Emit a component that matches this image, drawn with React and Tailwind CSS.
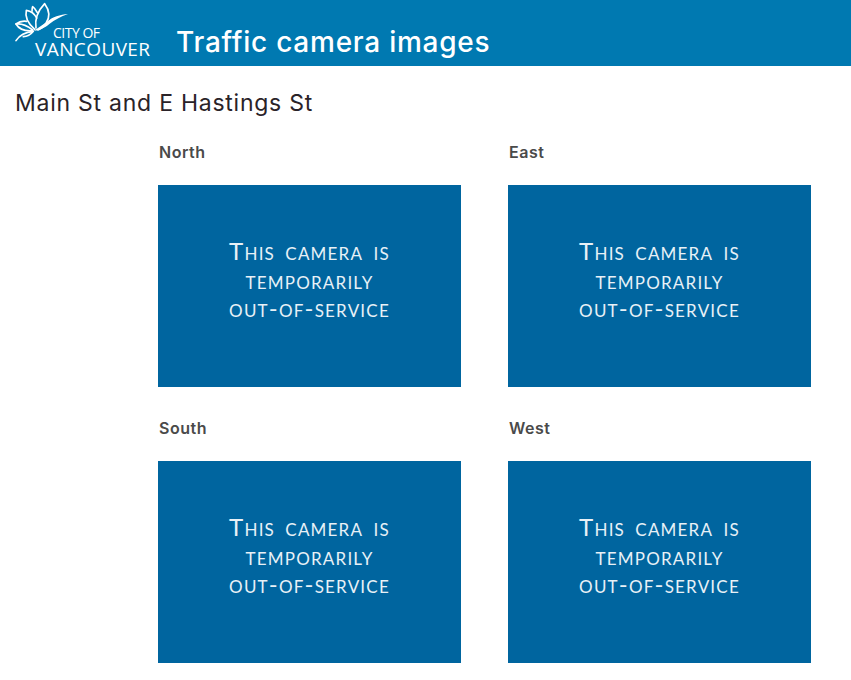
import React from "react";

const cameras = ["North", "East", "South", "West"];

const Logo = () => (
  <div className="relative w-[140px] h-[66px] shrink-0 flex flex-col pt-[26px] text-white font-['Open_Sans',sans-serif]">
    <svg width="60" height="46" viewBox="0 0 180 138" className="absolute left-[-2px] top-0" fill="none" stroke="#ffffff" strokeWidth="5" strokeLinejoin="round" strokeLinecap="round">
      <path d="M68 88 C50 72 38 52 43 31 C56 33 68 42 74 54" />
      <path d="M72 84 C68 58 78 32 98 11 C112 30 114 52 102 70 C96 79 88 86 78 90" />
      <path d="M76 38 C72 30 68 24 62 20 C60 24 60 28 60 34" />
      <path d="M104 66 C122 50 144 44 168 42 C146 50 128 60 112 72 C98 84 82 92 66 92" fill="#ffffff" stroke="none" />
      <path d="M62 90 C44 76 28 70 12 72 C20 66 32 62 44 64" />
      <path d="M12 72 C20 86 38 94 62 92" />
      <path d="M12 122 C22 106 40 96 64 94 C56 104 44 110 34 110" />
    </svg>
    <span className="ml-[39px] text-[14px] leading-[14px] tracking-[-0.5px]">CITY OF</span>
    <span className="ml-[21px] text-[19px] leading-[19px] tracking-[0.4px] font-medium">VANCOUVER</span>
  </div>
);

const CameraTile = ({ name }) => (
  <div>
    <h3 className="ml-px h-[68px] pt-[25px] text-[16px] leading-[20px] tracking-[0.5px] font-semibold text-[#4a4a4a]">{name}</h3>
    <div className="w-[303px] h-[202px] bg-[#00659f] flex flex-col items-center justify-center pb-[12px] text-[#e8f1f7] font-['Lato',sans-serif] text-[24px] leading-[28.5px] tracking-[1.2px] [word-spacing:3px] [font-variant:small-caps]">
      <span>This camera is</span>
      <span>temporarily</span>
      <span>out-of-service</span>
    </div>
  </div>
);

export default function App() {
  return (
    <div className="min-h-screen bg-white font-['Inter',sans-serif]">
      <header className="h-[66px] bg-[#0079b1] flex items-center pl-[14px] overflow-hidden">
        <Logo />
        <h1 className="ml-[22px] mt-[18px] text-[28px] font-medium tracking-[0.75px] text-white">Traffic camera images</h1>
      </header>
      <h2 className="h-[51px] pl-[15px] pt-[22px] text-[23px] leading-[30px] tracking-[0.75px] text-[#2a2328]">Main St and E Hastings St</h2>
      <div className="ml-[158px] grid grid-cols-[303px_303px] gap-x-[47px] gap-y-[6px]">
        {cameras.map((name) => (
          <CameraTile key={name} name={name} />
        ))}
      </div>
    </div>
  );
}
